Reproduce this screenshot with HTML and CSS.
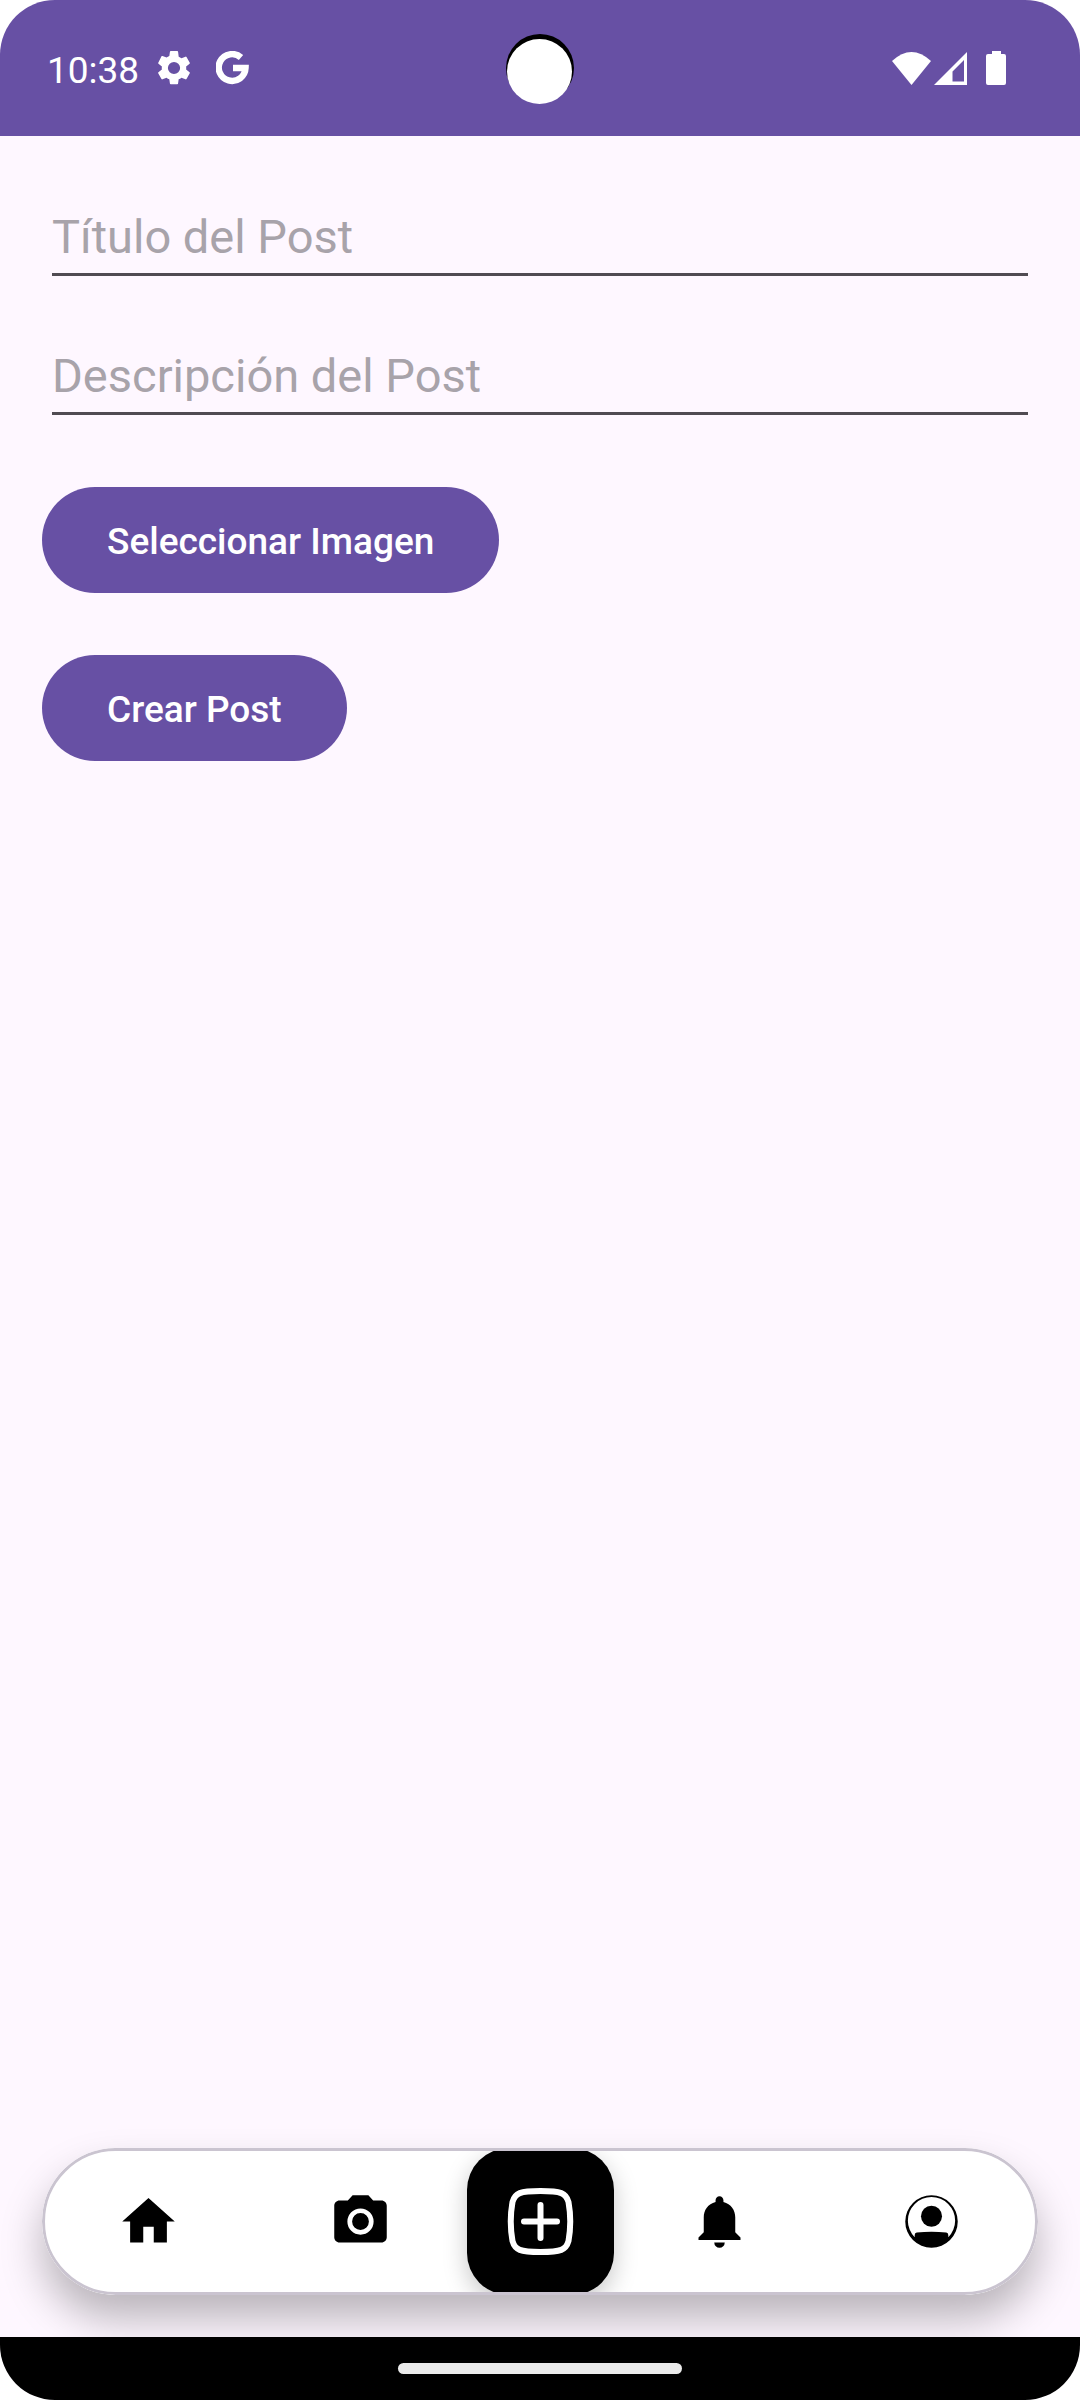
FILE: index.html
```html
<!DOCTYPE html>
<html lang="es">
<head>
<meta charset="utf-8">
<meta name="viewport" content="width=device-width, initial-scale=1">
<title>Crear Post</title>
<link rel="stylesheet" href="styles.css">
</head>
<body>
<div class="screen">
  <header class="status">
    <div class="status-left">
      <time class="clock">10:38</time>
      <svg class="gear" viewBox="2 2 20 20" aria-hidden="true"><path d="M19.14 12.94c.04-.3.06-.61.06-.94 0-.32-.02-.64-.07-.94l2.03-1.58a.49.49 0 0 0 .12-.61l-1.92-3.32a.488.488 0 0 0-.59-.22l-2.39.96c-.5-.38-1.03-.7-1.62-.94L14.4 2.4a.484.484 0 0 0-.48-.4h-3.84c-.24 0-.43.17-.47.41l-.36 2.54c-.59.24-1.13.57-1.62.94l-2.39-.96c-.22-.08-.47 0-.59.22L2.74 8.87c-.12.21-.08.47.12.61l2.03 1.58c-.05.3-.09.63-.09.94s.02.64.07.94l-2.03 1.58a.49.49 0 0 0-.12.61l1.92 3.32c.12.22.37.29.59.22l2.39-.96c.5.38 1.03.7 1.62.94l.36 2.54c.05.24.24.41.48.41h3.84c.24 0 .44-.17.47-.41l.36-2.54c.59-.24 1.13-.56 1.62-.94l2.39.96c.22.08.47 0 .59-.22l1.92-3.32c.12-.22.07-.47-.12-.61l-2.01-1.58zM12 15.6A3.61 3.61 0 0 1 8.4 12 3.61 3.61 0 0 1 12 8.4a3.61 3.61 0 0 1 3.6 3.6 3.61 3.61 0 0 1-3.6 3.6z"/></svg>
      <svg class="google" viewBox="0 0 33 34" aria-hidden="true"><path d="M25 6.500A13.400 13.400 0 1 0 29.500 17H17" fill="none" stroke="#fff" stroke-width="6.500"/></svg>
    </div>
    <span class="cutout"></span>
    <div class="status-right">
      <svg class="wifi" viewBox="0 0 39 33" aria-hidden="true"><path d="M0 9Q19.500-9 39 9L19.500 33Z"/></svg>
      <svg class="signal" viewBox="0 0 33 33" aria-hidden="true"><path fill-rule="evenodd" d="M33 0V33H0ZM30 8L18.500 19.500V29.500H30Z"/></svg>
      <svg class="battery" viewBox="0 0 20 34" aria-hidden="true"><path d="M6 0h9v3h3q2 0 2 2v27q0 2-2 2H2q-2 0-2-2V5q0-2 2-2h4z"/></svg>
    </div>
  </header>

  <main class="content">
    <form class="form">
      <input class="field" type="text" aria-label="Título del Post" placeholder="Título del Post">
      <input class="field" type="text" aria-label="Descripción del Post" placeholder="Descripción del Post">
      <div class="actions">
        <button class="btn" type="button">Seleccionar Imagen</button>
        <button class="btn" type="submit">Crear Post</button>
      </div>
    </form>
  </main>

  <nav class="tabs" aria-label="Principal">
    <button class="tab" type="button" aria-label="Inicio"><svg viewBox="0 0 24 24"><path d="M10 20v-6h4v6h5v-8h3L12 3 2 12h3v8z"/></svg></button>
    <button class="tab" type="button" aria-label="Cámara"><svg viewBox="0 0 24 24"><path d="M9 2 7.170 4H4c-1.100 0-2 .9-2 2v12c0 1.100.9 2 2 2h16c1.100 0 2-.9 2-2V6c0-1.100-.9-2-2-2h-3.170L15 2z"/><circle cx="12" cy="12" r="4.100" fill="none" stroke="#fff" stroke-width="1.800"/></svg></button>
    <button class="tab tab-add" type="button" aria-label="Nuevo post"><svg viewBox="0 0 67 67"><path d="M33.500 3C54 3 59 5 61.500 14Q65 33.500 61.500 53C59 62 54 64 33.500 64S8 62 5.500 53Q2 33.500 5.500 14C8 5 13 3 33.500 3ZM33.500 17V50M17 33.500H50"/></svg></button>
    <button class="tab" type="button" aria-label="Notificaciones"><svg viewBox="0 0 24 24"><path d="M12 2.400c-.85 0-1.500.65-1.500 1.500v.7C7.600 5.300 6 7.700 6 10.500v5.600l-2 2V19h16v-.9l-2-2v-5.600c0-2.800-1.600-5.200-4.500-5.900v-.7c0-.85-.65-1.500-1.500-1.500zM10 20h4a2 2 0 0 1-4 0z"/></svg></button>
    <button class="tab" type="button" aria-label="Perfil"><svg viewBox="0 0 24 24"><path fill-rule="evenodd" d="M12 2a10 10 0 1 0 0 20 10 10 0 0 0 0-20zM18.400 18V17.100Q18.400 16.300 17.600 16.200Q12 15.700 6.400 16.200Q5.600 16.300 5.600 17.100V18A9 9 0 1 1 18.400 18z"/><circle cx="12" cy="10" r="4"/></svg></button>
  </nav>

  <footer class="system"><span class="handle"></span></footer>
</div>
</body>
</html>
```
FILE: styles.css
```css
* {
  box-sizing: border-box;
}

body {
  margin: 0;
  background: #fff;
  font-family: Roboto, sans-serif;
}

svg {
  display: block;
}

.screen {
  display: flex;
  flex-direction: column;
  min-height: 100vh;
  overflow: hidden;
  border-radius: 55px;
  background: #fef7ff;
}

.status {
  position: relative;
  display: flex;
  align-items: center;
  justify-content: space-between;
  height: 136px;
  padding: 0 74px 0 47px;
  background: #6750a4;
  color: #fff;
  fill: #fff;
}

.status-left,
.status-right {
  display: flex;
  align-items: center;
}

.clock {
  padding-top: 5px;
  font-size: 37px;
  line-height: 44px;
}

.gear {
  width: 34px;
  height: 34px;
  margin-left: 18px;
}

.google {
  width: 33px;
  height: 34px;
  margin-left: 25px;
}

.wifi {
  width: 39px;
  height: 33px;
}

.signal {
  width: 33px;
  height: 33px;
  margin-left: 3px;
}

.battery {
  width: 20px;
  height: 34px;
  margin-left: 19px;
}

.cutout {
  position: absolute;
  top: 34px;
  left: 50%;
  width: 68px;
  height: 68px;
  margin-left: -34px;
  border-radius: 50%;
  background: #000;
}

.cutout::after {
  content: "";
  position: absolute;
  top: 5px;
  left: 1px;
  width: 65px;
  height: 65px;
  border-radius: 50%;
  background: #fff;
}

.content {
  flex: 1;
  padding: 61px 42px;
}

.form {
  display: flex;
  flex-direction: column;
  gap: 60px;
}

.field {
  height: 79px;
  margin: 0 10px;
  padding: 11px 0 9px;
  border: 0;
  border-bottom: 3px solid #504b52;
  border-radius: 0;
  outline: 0;
  background: transparent;
  color: #1d1b20;
  font: 400 47px/56px Roboto, sans-serif;
}

.field::placeholder {
  color: #a8a3aa;
  opacity: 1;
}

.actions {
  display: flex;
  flex-direction: column;
  align-items: flex-start;
  gap: 62px;
  padding-top: 12px;
}

.btn {
  height: 106px;
  padding: 3px 65px 0;
  border: 0;
  border-radius: 53px;
  background: #6750a4;
  color: #fff;
  font: 500 37px/44px Roboto, sans-serif;
}

.tabs {
  position: relative;
  display: flex;
  height: 147px;
  margin: 0 42px 42px;
  overflow: hidden;
  border-radius: 74px;
  background: #fff;
  box-shadow: 0 24px 42px rgba(0, 0, 0, 0.27);
}

.tabs::after {
  content: "";
  position: absolute;
  inset: 0;
  border: 3px solid #cac4d0;
  border-radius: inherit;
  pointer-events: none;
}

.tab {
  display: flex;
  flex: 1;
  align-items: center;
  justify-content: center;
  padding: 0;
  border: 0;
  background: transparent;
}

.tab svg {
  width: 63px;
  height: 63px;
}

.tab-add {
  flex: 0 0 147px;
  border-radius: 42px;
  background: #000;
  box-shadow: 0 8px 24px rgba(0, 0, 0, 0.22);
}

.tab-add svg {
  width: 67px;
  height: 67px;
  fill: none;
  stroke: #fff;
  stroke-width: 6;
  stroke-linecap: round;
}

.system {
  position: relative;
  display: flex;
  align-items: center;
  justify-content: center;
  height: 63px;
  background: #000;
}

.handle {
  width: 284px;
  height: 11px;
  border-radius: 6px;
  background: #ebebeb;
}
```
